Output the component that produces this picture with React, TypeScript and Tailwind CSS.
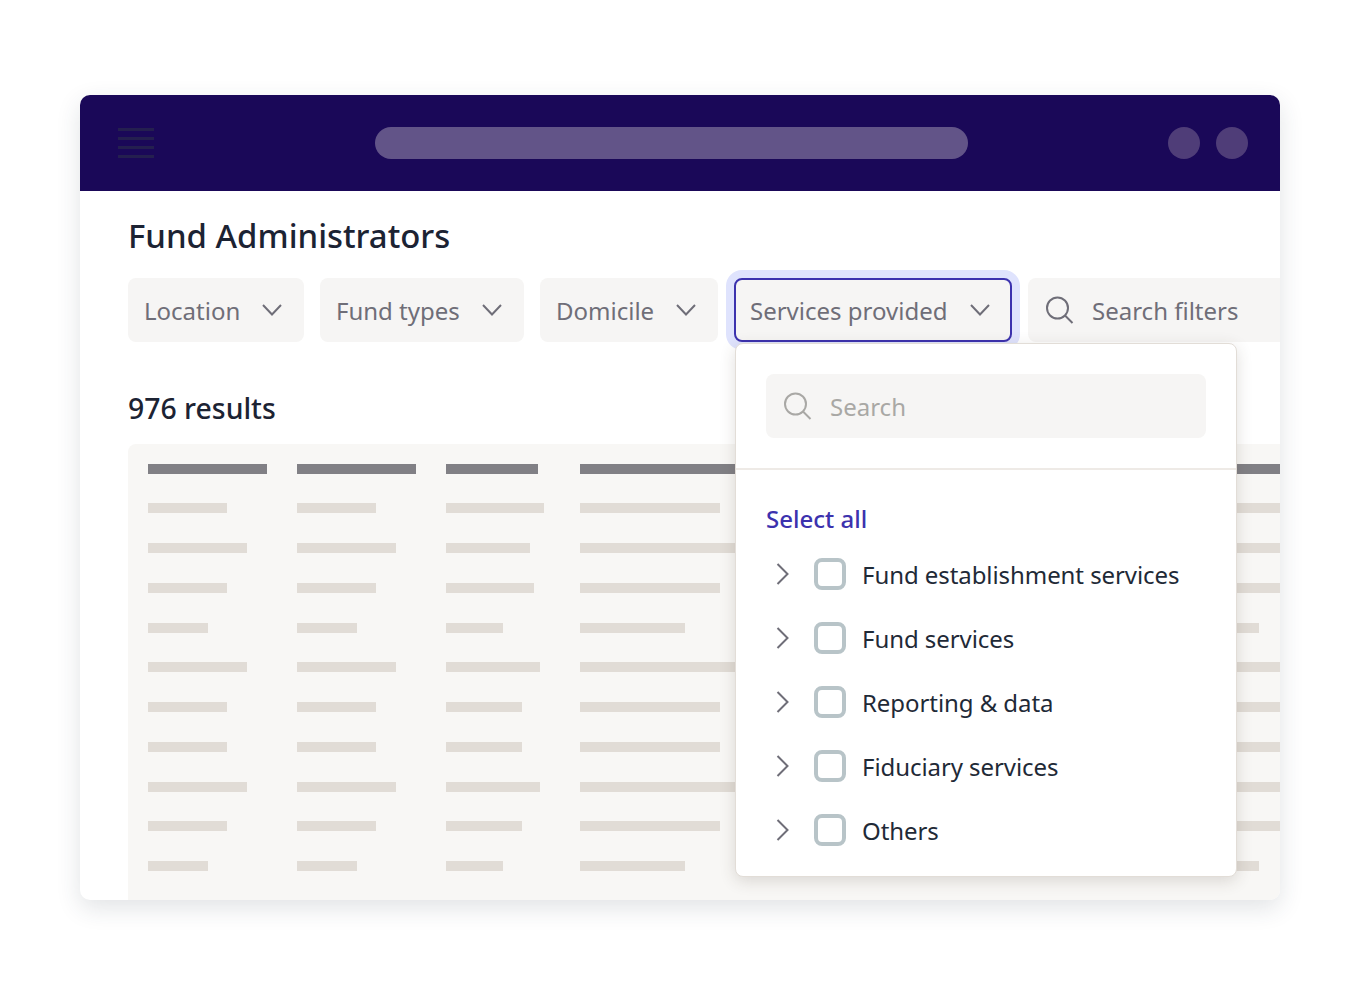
import React from 'react';

const columns = [
    { header: 119, bars: [79, 99, 79, 60, 99, 79, 79, 99, 79, 60] },
    { header: 119, bars: [79, 99, 79, 60, 99, 79, 79, 99, 79, 60] },
    { header: 92, bars: [98, 84, 88, 57, 94, 76, 76, 94, 76, 57] },
    { header: 160, bars: [140, 160, 140, 105, 160, 140, 140, 160, 140, 105] },
];

const services = [
    'Fund establishment services',
    'Fund services',
    'Reporting & data',
    'Fiduciary services',
    'Others',
];

const ChevronDown: React.FC = () => (
    <svg width="20" height="12" viewBox="0 0 20 12" fill="none" className="flex-none">
        <path d="M1 1l9 9.5L19 1" stroke="#6f6e78" strokeWidth="2" />
    </svg>
);

const ChevronRight: React.FC = () => (
    <svg width="13" height="22" viewBox="0 0 13 22" fill="none" className="flex-none mb-[2px]">
        <path d="M1.5 1l10 10-10 10" stroke="#6f6e78" strokeWidth="2" />
    </svg>
);

const SearchIcon: React.FC<{ color: string }> = ({ color }) => (
    <svg width="28" height="28" viewBox="0 0 28 28" fill="none" className="flex-none">
        <circle cx="11.5" cy="12" r="10.5" stroke={color} strokeWidth="2" />
        <path d="M19 19.5l7.5 7.5" stroke={color} strokeWidth="2" />
    </svg>
);

const FilterChip: React.FC<{ label: string; width: string }> = ({ label, width }) => (
    <div className={`flex flex-none items-center justify-between h-16 pl-4 pr-[22px] rounded-lg bg-[#f6f5f4] text-[#6f6e78] ${width}`}>
        <span className="pt-[2px]">{label}</span>
        <ChevronDown />
    </div>
);

const App: React.FC = () => (
    <div className="h-[1000px] bg-white pt-[95px] pl-20 text-2xl font-['Noto_Sans',sans-serif]">
        <div className="relative flex flex-col w-[1200px] h-[805px] rounded-[10px] bg-white shadow-[0_8px_24px_rgba(40,60,70,0.14)]">
            <div className="flex flex-none items-center h-24 pl-[38px] pr-8 rounded-t-[10px] bg-[#1a0858]">
                <div className="flex flex-col gap-[6px] w-9">
                    <div className="h-[3px] bg-[#241f4f]" />
                    <div className="h-[3px] bg-[#241f4f]" />
                    <div className="h-[3px] bg-[#241f4f]" />
                    <div className="h-[3px] bg-[#241f4f]" />
                </div>
                <div className="w-[593px] h-8 ml-[221px] rounded-full bg-[#625488]" />
                <div className="w-8 h-8 ml-auto rounded-full bg-[#4f3d78]" />
                <div className="w-8 h-8 ml-4 rounded-full bg-[#4f3d78]" />
            </div>

            <div className="flex flex-col flex-1 min-h-0 pl-12 overflow-hidden rounded-b-[10px]">
                <h1 className="mt-[23px] text-[32.9px] leading-[44px] font-medium text-[#1c2333]">Fund Administrators</h1>

                <div className="flex gap-4 mt-5">
                    <FilterChip label="Location" width="w-[176px]" />
                    <FilterChip label="Fund types" width="w-[204px]" />
                    <FilterChip label="Domicile" width="w-[178px]" />
                    <div className="flex flex-none items-center justify-between w-[278px] h-16 pl-[14px] pr-5 rounded-lg border-2 border-[#3c32ae] bg-[#f6f5f4] text-[#6f6e78] ring-8 ring-[#dfe3fd]">
                        <span className="pt-[2px]">Services provided</span>
                        <ChevronDown />
                    </div>
                    <div className="flex flex-none items-center gap-[18px] w-[300px] h-16 pl-[18px] rounded-lg bg-[#f6f5f4] text-[#6f6e78]">
                        <SearchIcon color="#6f6e78" />
                        <span className="pt-[2px]">Search filters</span>
                    </div>
                </div>

                <div className="mt-[46px] text-[28.4px] leading-10 font-medium text-[#1c2333]">976 results</div>

                <div className="flex flex-1 gap-[30px] w-[1300px] mt-4 pl-5 pt-5 rounded-tl-lg bg-[#f8f7f5]">
                    {columns.map((col, i) => (
                        <div key={i} className={`flex flex-col flex-none gap-[29.75px] ${i === 2 ? 'w-[104px]' : 'w-[119px]'}`}>
                            <div className="h-[10px] -mb-[0.35px] bg-[#818085]" style={{ width: col.header }} />
                            {col.bars.map((w, j) => (
                                <div key={j} className="h-[10px] bg-[#e1dcd6]" style={{ width: w }} />
                            ))}
                        </div>
                    ))}
                    <div className="flex flex-col flex-none gap-[29.75px] w-[180px] ml-[500px]">
                        <div className="h-[10px] -mb-[0.35px] bg-[#818085]" />
                        {[180, 180, 180, 30, 180, 180, 180, 180, 180, 30].map((w, j) => (
                            <div key={j} className="h-[10px] bg-[#e1dcd6]" style={{ width: w }} />
                        ))}
                    </div>
                </div>
            </div>

            <div className="absolute left-[655px] top-[248px] w-[502px] h-[534px] rounded-lg border border-[#e2ddd7] bg-white shadow-[0_4px_16px_rgba(60,50,40,0.16)]">
                <div className="px-[30px] pt-[30px] pb-[30px] border-b-2 border-[#eeeae6]">
                    <div className="flex items-center gap-[18px] h-16 pl-[18px] rounded-lg bg-[#f6f5f4] text-[#a9a8a5]">
                        <SearchIcon color="#a9a8a5" />
                        <span className="pt-[2px]">Search</span>
                    </div>
                </div>
                <div className="mt-[33px] px-[30px] leading-8 font-medium text-[#3c32ae]">Select all</div>
                <div className="flex flex-col mt-[8px]">
                    {services.map((name) => (
                        <div key={name} className="flex items-center h-16 pl-10 text-[#1f2a37]">
                            <ChevronRight />
                            <div className="flex-none w-8 h-8 mb-[2px] ml-[25px] rounded-lg border-4 border-[#b8c4c8]" />
                            <span className="ml-4 tracking-[-0.07px]">{name}</span>
                        </div>
                    ))}
                </div>
            </div>
        </div>
    </div>
);

export default App;
